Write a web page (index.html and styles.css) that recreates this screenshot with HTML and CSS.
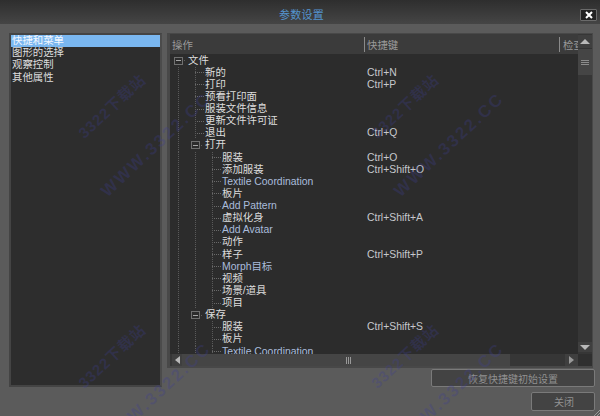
FILE: index.html
```html
<!DOCTYPE html>
<html lang="zh">
<head>
<meta charset="utf-8">
<title>参数设置</title>
<link rel="stylesheet" href="styles.css">
</head>
<body>
<div class="app">
  <header class="titlebar">
    <span class="title">参数设置</span>
    <button class="win-close"><svg width="8" height="8" viewBox="0 0 8 8"><path d="M1 1l6 6M7 1L1 7" stroke="#fff" stroke-width="2"/></svg></button>
  </header>
  <main class="content">
    <ul class="categories">
      <li class="cat selected">快捷和菜单</li>
      <li class="cat">图形的选择</li>
      <li class="cat">观察控制</li>
      <li class="cat">其他属性</li>
    </ul>
    <section class="table">
      <div class="table-main">
        <div class="table-view">
          <div class="thead">
            <span class="th th-op">操作</span>
            <span class="th th-key">快捷键</span>
            <span class="th th-check">检查</span>
          </div>
          <div class="tree">
            <div class="row"><span class="cell"><span class="exp"></span></span><span class="name">文件</span></div>
            <div class="row"><span class="cell v"></span><span class="cell b"></span><span class="name">新的</span><span class="key">Ctrl+N</span></div>
            <div class="row"><span class="cell v"></span><span class="cell b"></span><span class="name">打印</span><span class="key">Ctrl+P</span></div>
            <div class="row"><span class="cell v"></span><span class="cell b"></span><span class="name">预看打印面</span></div>
            <div class="row"><span class="cell v"></span><span class="cell b"></span><span class="name">服装文件信息</span></div>
            <div class="row"><span class="cell v"></span><span class="cell b"></span><span class="name">更新文件许可证</span></div>
            <div class="row"><span class="cell v"></span><span class="cell b"></span><span class="name">退出</span><span class="key">Ctrl+Q</span></div>
            <div class="row"><span class="cell v"></span><span class="cell"><span class="exp"></span></span><span class="name">打开</span></div>
            <div class="row"><span class="cell v"></span><span class="cell v"></span><span class="cell b"></span><span class="name">服装</span><span class="key">Ctrl+O</span></div>
            <div class="row"><span class="cell v"></span><span class="cell v"></span><span class="cell b"></span><span class="name">添加服装</span><span class="key">Ctrl+Shift+O</span></div>
            <div class="row"><span class="cell v"></span><span class="cell v"></span><span class="cell b"></span><span class="name en">Textile Coordination</span></div>
            <div class="row"><span class="cell v"></span><span class="cell v"></span><span class="cell b"></span><span class="name">板片</span></div>
            <div class="row"><span class="cell v"></span><span class="cell v"></span><span class="cell b"></span><span class="name en">Add Pattern</span></div>
            <div class="row"><span class="cell v"></span><span class="cell v"></span><span class="cell b"></span><span class="name">虚拟化身</span><span class="key">Ctrl+Shift+A</span></div>
            <div class="row"><span class="cell v"></span><span class="cell v"></span><span class="cell b"></span><span class="name en">Add Avatar</span></div>
            <div class="row"><span class="cell v"></span><span class="cell v"></span><span class="cell b"></span><span class="name">动作</span></div>
            <div class="row"><span class="cell v"></span><span class="cell v"></span><span class="cell b"></span><span class="name">样子</span><span class="key">Ctrl+Shift+P</span></div>
            <div class="row"><span class="cell v"></span><span class="cell v"></span><span class="cell b"></span><span class="name en">Morph目标</span></div>
            <div class="row"><span class="cell v"></span><span class="cell v"></span><span class="cell b"></span><span class="name">视频</span></div>
            <div class="row"><span class="cell v"></span><span class="cell v"></span><span class="cell b"></span><span class="name">场景/道具</span></div>
            <div class="row"><span class="cell v"></span><span class="cell v"></span><span class="cell b"></span><span class="name">项目</span></div>
            <div class="row"><span class="cell v"></span><span class="cell"><span class="exp"></span></span><span class="name">保存</span></div>
            <div class="row"><span class="cell v"></span><span class="cell v"></span><span class="cell b"></span><span class="name">服装</span><span class="key">Ctrl+Shift+S</span></div>
            <div class="row"><span class="cell v"></span><span class="cell v"></span><span class="cell b"></span><span class="name">板片</span></div>
            <div class="row"><span class="cell v"></span><span class="cell v"></span><span class="cell b"></span><span class="name en">Textile Coordination</span></div>
          </div>
        </div>
        <div class="vscroll">
          <span class="sb-btn"><svg width="10" height="6" viewBox="0 0 10 6"><path d="M5 0l5 5H0z" fill="#b8b8b8"/></svg></span>
          <span class="v-thumb"><i></i><i></i><i></i></span>
          <span class="v-track"></span>
          <span class="sb-btn sb-down"><svg width="10" height="6" viewBox="0 0 10 6"><path d="M0 1h10L5 6z" fill="#b8b8b8"/></svg></span>
        </div>
      </div>
      <div class="hscroll">
        <span class="h-btn"><svg width="5" height="8" viewBox="0 0 5 8"><path d="M5 0v8L0 4z" fill="#b8b8b8"/></svg></span>
        <span class="h-thumb"><i></i><i></i><i></i></span>
        <span class="h-track"></span>
        <span class="h-btn"><svg width="5" height="8" viewBox="0 0 5 8"><path d="M0 0v8l5-4z" fill="#999"/></svg></span>
        <span class="h-corner"></span>
      </div>
    </section>
    <div class="actions">
      <button class="btn btn-reset">恢复快捷键初始设置</button>
      <button class="btn btn-close">关闭</button>
    </div>
  </main>
  <div class="watermarks">
    <span class="wm wm1">3322下载站</span>
    <span class="wm wm2">3322下载站</span>
    <span class="wm wm3">3322下载站</span>
    <span class="wm wm4">3322下载站</span>
    <span class="wm wm5">WWW.3322.CC</span>
    <span class="wm wm6">WWW.3322.CC</span>
    <span class="wm wm7">WWW.3322.CC</span>
    <span class="wm wm8">WWW.3322.CC</span>
  </div>
  <svg class="grip" width="6" height="6" viewBox="0 0 6 6"><path d="M0 6l6-6M3 6l3-3" stroke="#999" fill="none"/></svg>
</div>
</body>
</html>
```

FILE: styles.css
```css
* { box-sizing: border-box; }
html, body { margin: 0; padding: 0; }
body {
  width: 600px;
  height: 416px;
  overflow: hidden;
  background: #5b5b5b;
  font-family: "Liberation Sans", "Noto Sans CJK SC", sans-serif;
  font-size: 10.4px;
  color: #dcdcdc;
}
.app {
  position: relative;
  width: 600px;
  height: 416px;
  display: flex;
  flex-direction: column;
  overflow: hidden;
}
.titlebar {
  height: 24px;
  flex: none;
  display: flex;
  align-items: center;
  justify-content: center;
  padding-top: 4px;
  position: relative;
  background: linear-gradient(#2e2e2e, #454545);
}
.title { color: #5494cf; font-size: 11px; letter-spacing: .2px; margin-left: 3px; }
.win-close {
  position: absolute;
  right: 3px;
  top: 9px;
  width: 17px;
  height: 12px;
  padding: 0;
  display: flex;
  align-items: center;
  justify-content: center;
  background: #222;
  border: 1px solid #6a6a6a;
  border-radius: 1px;
}
.content {
  flex: 1;
  display: grid;
  grid-template-columns: 153px 428px;
  grid-template-rows: 335px auto;
  column-gap: 5px;
  padding: 9px 0 0 9px;
}
.categories {
  grid-row: 1 / 3;
  list-style: none;
  margin: 0;
  padding: 0;
  height: 354px;
  background: #2d2d2d;
  border: 2px solid #444;
  border-right-color: #4b4b4b;
}
.cat { height: 12.2px; line-height: 12.2px; padding-left: 1px; color: #dedede; }
.selected { background: #7ab7f0; color: #f4f8ff; }
.table {
  display: flex;
  flex-direction: column;
  margin-right: 2px;
  background: #3d3d3d;
  border: 2px solid #484848;
  border-width: 1px 1px 2px 3px;
}
.table-main { display: flex; flex: 1; min-height: 0; }
.table-view { flex: 1; min-width: 0; display: flex; flex-direction: column; }
.thead {
  height: 20px;
  flex: none;
  display: flex;
  align-items: center;
  background: #3b3b3b;
  color: #9a9a9a;
}
.th { height: 15px; line-height: 15px; padding-top: 1px; white-space: nowrap; overflow: hidden; }
.th-op { width: 194px; padding-left: 2px; }
.th-key { width: 195px; padding-left: 2px; border-left: 1px solid #8a8a8a; }
.th-check { flex: 1; padding-left: 3px; border-left: 1px solid #8a8a8a; }
.tree { flex: 1; background: #2c2c2c; overflow: hidden; padding: 0.5px 0 0 2px; }
.row { height: 12.125px; line-height: 12.125px; display: flex; white-space: nowrap; }
.cell {
  width: 17px;
  flex: none;
  display: flex;
  align-items: center;
  background-repeat: no-repeat;
  background-image: linear-gradient(90deg, #5d5d5d 50%, transparent 50%);
  background-size: 2px 1px;
  background-position: 12px 50%;
}
.v, .b {
  background-image: repeating-linear-gradient(#5a5a5a 0 1px, transparent 1px 2px);
  background-size: 1px 100%;
  background-position: 6px 0;
}
.b {
  background-image:
    repeating-linear-gradient(#5a5a5a 0 1px, transparent 1px 2px),
    repeating-linear-gradient(90deg, #6a6a6a 0 1px, transparent 1px 2px);
  background-size: 1px 100%, 9px 1px;
  background-position: 6px 0, 6px 50%;
}
.exp {
  width: 9px;
  height: 8px;
  margin-left: 2px;
  display: flex;
  align-items: center;
  justify-content: center;
  background: #2c2c2c;
  border: 1px solid #707070;
}
.exp::before { content: ""; width: 5px; height: 1px; background: #a5a5a5; }
.name { flex: 1; min-width: 0; margin-left: -1px; color: #dedede; }
.en { color: #aabcdc; }
.key { width: 211px; flex: none; color: #c6c8cc; }
.vscroll {
  width: 14px;
  flex: none;
  display: flex;
  flex-direction: column;
  background: #363636;
  padding: 1px 0 2px;
}
.sb-btn {
  height: 13px;
  flex: none;
  display: flex;
  align-items: center;
  justify-content: center;
  background: #3f3f3f;
}
.sb-down { height: 10px; }
.v-thumb {
  height: 27px;
  flex: none;
  display: flex;
  flex-direction: column;
  align-items: center;
  justify-content: center;
  gap: 1px;
  background: #454545;
  border-top: 1px solid #333;
}
.v-thumb i { width: 8px; height: 1px; background: #8c8c8c; }
.v-track { flex: 1; }
.hscroll { height: 12px; flex: none; display: flex; align-items: stretch; background: #363636; padding-left: 2px; }
.h-btn { width: 10px; flex: none; display: flex; align-items: center; justify-content: center; background: #3f3f3f; }
.h-btn:nth-last-child(2) { width: 13px; }
.h-thumb {
  width: 328px;
  flex: none;
  display: flex;
  align-items: center;
  justify-content: center;
  gap: 1px;
  padding-left: 4px;
  background: #454545;
}
.h-thumb i { width: 1px; height: 7px; background: #999; }
.h-track { flex: 1; }
.h-corner { width: 14px; flex: none; background: #2f2f2f; }
.actions { display: flex; flex-direction: column; align-items: flex-end; gap: 5px; padding-top: 1px; }
.btn {
  padding: 0;
  font: inherit;
  font-size: 10px;
  color: #919191;
  background: #434343;
  border: 1px solid #7a7a7a;
  border-radius: 2px;
}
.btn-reset { width: 164px; height: 18px; }
.btn-close { width: 64px; height: 19px; padding-left: 2px; }
.watermarks { position: absolute; inset: 0; pointer-events: none; }
.wm {
  position: absolute;
  font-weight: 700;
  white-space: nowrap;
  transform: rotate(-43deg);
  transform-origin: 0 50%;
  color: rgba(62, 62, 150, .28);
}
.wm1, .wm2, .wm3, .wm4 { font-size: 15px; letter-spacing: 1px; }
.wm5, .wm6, .wm7, .wm8 { font-size: 17px; letter-spacing: 2.2px; }
.wm1 { left: 80px; top: 124px; }
.wm2 { left: 373px; top: 124px; }
.wm3 { left: 80px; top: 374px; }
.wm4 { left: 373px; top: 374px; }
.wm5 { left: 104px; top: 184px; }
.wm6 { left: 397px; top: 184px; }
.wm7 { left: 104px; top: 434px; }
.wm8 { left: 397px; top: 434px; }
.grip { position: absolute; right: 0; bottom: 0; }
```
